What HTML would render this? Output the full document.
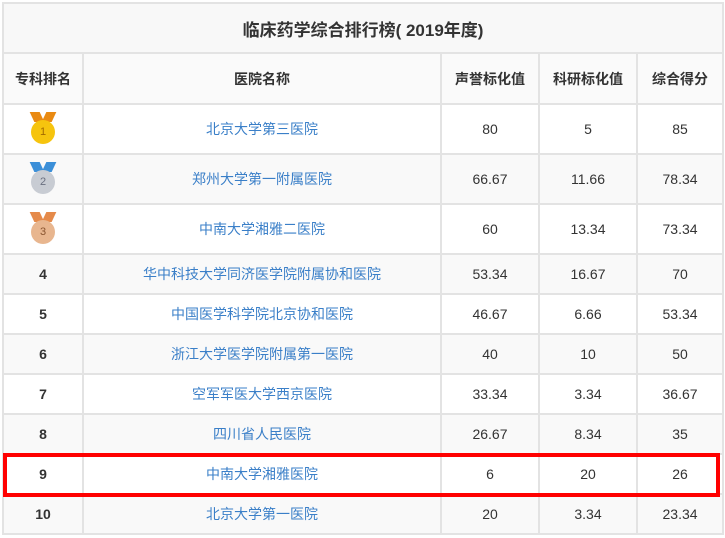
<!DOCTYPE html>
<html><head><meta charset="utf-8"><style>
body{margin:0;background:#fff;width:725px;height:538px;overflow:hidden;font-family:"Liberation Sans","Noto Sans CJK SC",sans-serif;}
table{position:absolute;left:2px;top:2px;border-collapse:collapse;width:720px;table-layout:fixed;}
td{border:2px solid #e3e3e3;text-align:center;font-size:14px;color:#333;padding:0;}
.t td{height:48px;font-size:17px;font-weight:bold;background:#f8f8f8;}
.h td{height:49px;font-weight:bold;background:#fafafa;}
.m td{height:48px;}
.r td{height:38px;}
tr.s td{background:#f9f9f9;}
a{color:#3a7fc8;text-decoration:none;}
.b{font-weight:bold;}
.med{display:inline-block;position:relative;width:28px;height:34px;vertical-align:middle;}
.med i{position:absolute;top:0;width:10px;height:10px;}
.med i.l{left:3px;transform:skewX(25deg);}
.med i.r2{right:3px;transform:skewX(-25deg);}
.med b{position:absolute;left:2px;top:8px;width:24px;height:24px;border-radius:50%;font-size:11px;font-weight:normal;line-height:24px;}
.red{position:absolute;left:3px;top:453px;width:709px;height:36px;border:4px solid #f00;}
</style></head><body>
<table>
<colgroup><col style="width:80px"><col style="width:358px"><col style="width:98px"><col style="width:98px"><col style="width:86px"></colgroup>
<tr class="t"><td colspan="5">临床药学综合排行榜( 2019年度)</td></tr>
<tr class="h"><td>专科排名</td><td>医院名称</td><td>声誉标化值</td><td>科研标化值</td><td>综合得分</td></tr>
<tr class="m"><td><span class="med"><i class="l" style="background:#e98a12"></i><i class="r2" style="background:#e98a12"></i><b style="background:#f6c40e;color:#a26a00">1</b></span></td><td><a>北京大学第三医院</a></td><td>80</td><td>5</td><td>85</td></tr>
<tr class="m s"><td><span class="med"><i class="l" style="background:#3b8fd8"></i><i class="r2" style="background:#3b8fd8"></i><b style="background:#c8ccd3;color:#6a7080">2</b></span></td><td><a>郑州大学第一附属医院</a></td><td>66.67</td><td>11.66</td><td>78.34</td></tr>
<tr class="m"><td><span class="med"><i class="l" style="background:#e58a4a"></i><i class="r2" style="background:#e58a4a"></i><b style="background:#e8b68f;color:#8a5530">3</b></span></td><td><a>中南大学湘雅二医院</a></td><td>60</td><td>13.34</td><td>73.34</td></tr>
<tr class="r s"><td class="b">4</td><td><a>华中科技大学同济医学院附属协和医院</a></td><td>53.34</td><td>16.67</td><td>70</td></tr>
<tr class="r"><td class="b">5</td><td><a>中国医学科学院北京协和医院</a></td><td>46.67</td><td>6.66</td><td>53.34</td></tr>
<tr class="r s"><td class="b">6</td><td><a>浙江大学医学院附属第一医院</a></td><td>40</td><td>10</td><td>50</td></tr>
<tr class="r"><td class="b">7</td><td><a>空军军医大学西京医院</a></td><td>33.34</td><td>3.34</td><td>36.67</td></tr>
<tr class="r s"><td class="b">8</td><td><a>四川省人民医院</a></td><td>26.67</td><td>8.34</td><td>35</td></tr>
<tr class="r"><td class="b">9</td><td><a>中南大学湘雅医院</a></td><td>6</td><td>20</td><td>26</td></tr>
<tr class="r s"><td class="b">10</td><td><a>北京大学第一医院</a></td><td>20</td><td>3.34</td><td>23.34</td></tr>
</table>
<div class="red"></div>
</body></html>
